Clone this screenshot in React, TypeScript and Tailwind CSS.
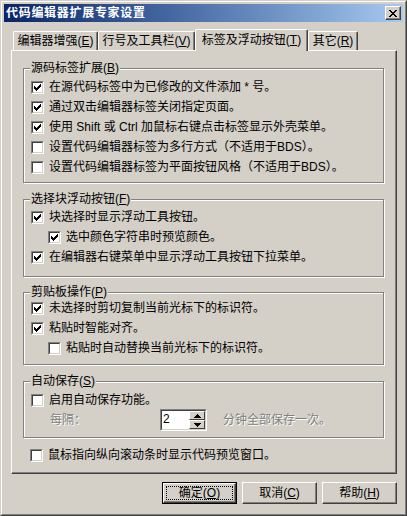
import type { ReactNode } from 'react'

const FACE = 'bg-[#d4d0c8]'

function Check() {
  return (
    <svg width="7" height="7" viewBox="0 0 7 7" shapeRendering="crispEdges">
      <path
        d="M6 0h1v3h-1zM5 1h1v3h-1zM4 2h1v3h-1zM0 2h1v3h-1zM1 3h1v3h-1zM2 4h1v3h-1zM3 3h1v3h-1z"
        fill="#000"
      />
    </svg>
  )
}

function Box({ checked }: { checked: boolean }) {
  return (
    <span className="flex h-[13px] w-[13px] shrink-0 border border-t-[#808080] border-l-[#808080] border-r-white border-b-white">
      <span className="flex flex-1 items-center justify-center border border-t-[#404040] border-l-[#404040] border-r-[#d4d0c8] border-b-[#d4d0c8] bg-white">
        {checked && <Check />}
      </span>
    </span>
  )
}

function Row({
  checked,
  indent,
  children,
}: {
  checked: boolean
  indent?: boolean
  children: ReactNode
}) {
  return (
    <div className={`flex h-[20px] items-center gap-[5px] ${indent ? 'pl-[24px]' : 'pl-[7px]'}`}>
      <Box checked={checked} />
      <span className="whitespace-nowrap leading-[14px]">{children}</span>
    </div>
  )
}

function Group({
  title,
  k,
  className,
  children,
}: {
  title: string
  k: string
  className: string
  children: ReactNode
}) {
  return (
    <div
      className={`relative w-[361px] border border-[#808080] shadow-[inset_1px_1px_0_#fff,1px_1px_0_#fff] ${className}`}
    >
      <span className={`absolute -top-[8px] left-[6px] px-[1px] leading-[14px] ${FACE}`}>
        {title}(<u>{k}</u>)
      </span>
      {children}
    </div>
  )
}

function Tab({ label, k, w, active }: { label: string; k: string; w: string; active?: boolean }) {
  return (
    <div
      className={`flex items-center justify-center rounded-t-[2px] border-t border-l border-r border-t-white border-l-white border-r-[#404040] shadow-[inset_-1px_0_0_#808080] ${FACE} ${w} ${
        active ? 'relative z-10 h-[22px] self-start pb-[2px]' : 'h-[19px] self-end'
      }`}
    >
      <span className="whitespace-nowrap leading-[14px]">
        {label}(<u>{k}</u>)
      </span>
    </div>
  )
}

function Button({ label, k, def }: { label: string; k: string; def?: boolean }) {
  if (def) {
    return (
      <div className="flex h-[22px] w-[75px] border border-black">
        <div className="flex flex-1 border border-t-white border-l-white border-r-[#404040] border-b-[#404040] p-[2px] shadow-[inset_-1px_-1px_0_#808080]">
          <div className="flex flex-1 items-center justify-center border border-dotted border-black leading-[14px]">
            {label}(<u>{k}</u>)
          </div>
        </div>
      </div>
    )
  }
  return (
    <div className="flex h-[22px] w-[75px] items-center justify-center border border-t-white border-l-white border-r-[#404040] border-b-[#404040] leading-[14px] shadow-[inset_-1px_-1px_0_#808080]">
      {label}(<u>{k}</u>)
    </div>
  )
}

function Arrow({ up }: { up?: boolean }) {
  return (
    <div className="flex flex-1 items-center justify-center border border-t-white border-l-white border-r-[#404040] border-b-[#404040] bg-[#d4d0c8]">
      <svg width="7" height="4" viewBox="0 0 7 4" shapeRendering="crispEdges">
        <path d={up ? 'M3 0h1v1h-1zM2 1h3v1h-3zM1 2h5v1h-5zM0 3h7v1h-7z' : 'M0 0h7v1h-7zM1 1h5v1h-5zM2 2h3v1h-3zM3 3h1v1h-1z'} fill="#000" />
      </svg>
    </div>
  )
}

function Disabled({ children }: { children: ReactNode }) {
  return <span className="whitespace-nowrap leading-[14px] text-[#808080] [text-shadow:1px_1px_0_#fff]">{children}</span>
}

export default function App() {
  return (
    <div
      className={`h-[516px] w-[407px] overflow-hidden text-[12px] text-black ${FACE}`}
      style={{ fontFamily: '"Liberation Sans", "Noto Sans CJK SC", sans-serif' }}
    >
      <div className="h-full border border-t-[#d4d0c8] border-l-[#d4d0c8] border-r-[#404040] border-b-[#404040]">
        <div className="flex h-full flex-col border border-t-white border-l-white border-r-[#808080] border-b-[#808080] p-[2px]">
          {/* 標題列 */}
          <div className="flex h-[18px] items-center justify-between bg-linear-to-r from-[#0a246a] to-[#a6caf0] pl-[2px] pr-[2px]">
            <span className="font-bold leading-[14px] tracking-[0.7px] text-white">代码编辑器扩展专家设置</span>
            <div className="flex h-[14px] w-[16px] items-center justify-center border border-t-white border-l-white border-r-[#404040] border-b-[#404040] bg-[#d4d0c8] shadow-[inset_-1px_-1px_0_#808080]">
              <svg width="8" height="7" viewBox="0 0 8 7" shapeRendering="crispEdges">
                <path
                  d="M0 0h2v1h-2zM6 0h2v1h-2zM1 1h2v1h-2zM5 1h2v1h-2zM2 2h4v1h-4zM3 3h2v1h-2zM2 4h4v1h-4zM1 5h2v1h-2zM5 5h2v1h-2zM0 6h2v1h-2zM6 6h2v1h-2z"
                  fill="#000"
                />
              </svg>
            </div>
          </div>

          <div className="flex flex-1 flex-col pl-[7px] pr-[6px] pt-[7px]">
            {/* 分頁標籤 */}
            <div className="flex h-[21px] pl-[2px]">
              <Tab label="编辑器增强" k="E" w="w-[85px]" />
              <Tab label="行号及工具栏" k="V" w="w-[97px]" />
              <Tab label="标签及浮动按钮" k="T" w="w-[113px]" active />
              <Tab label="其它" k="R" w="w-[50px]" />
            </div>

            {/* 分頁內容 */}
            <div className="flex h-[424px] flex-col border border-t-white border-l-white border-r-[#404040] border-b-[#404040] pl-[11px] pt-[17px] shadow-[inset_-1px_-1px_0_#808080]">
              <Group title="源码标签扩展" k="B" className="h-[115px] pt-[8px]">
                <Row checked>在源代码标签中为已修改的文件添加 * 号。</Row>
                <Row checked>通过双击编辑器标签关闭指定页面。</Row>
                <Row checked>使用 Shift 或 Ctrl 加鼠标右键点击标签显示外壳菜单。</Row>
                <Row checked={false}>设置代码编辑器标签为多行方式（不适用于BDS）。</Row>
                <Row checked={false}>设置代码编辑器标签为平面按钮风格（不适用于BDS）。</Row>
              </Group>

              <Group title="选择块浮动按钮" k="F" className="mt-[16px] h-[78px] pt-[7px]">
                <Row checked>块选择时显示浮动工具按钮。</Row>
                <Row checked indent>选中颜色字符串时预览颜色。</Row>
                <Row checked>在编辑器右键菜单中显示浮动工具按钮下拉菜单。</Row>
              </Group>

              <Group title="剪贴板操作" k="P" className="mt-[15px] h-[73px] pt-[5px]">
                <Row checked>未选择时剪切复制当前光标下的标识符。</Row>
                <Row checked>粘贴时智能对齐。</Row>
                <Row checked={false} indent>粘贴时自动替换当前光标下的标识符。</Row>
              </Group>

              <Group title="自动保存" k="S" className="mt-[16px] h-[57px] pt-[8px]">
                <Row checked={false}>启用自动保存功能。</Row>
                <div className="-mt-[1px] flex h-[22px] items-center pl-[26px]">
                  <span className="w-[110px]">
                    <Disabled>每隔：</Disabled>
                  </span>
                  <div className="flex h-[22px] w-[47px] border border-t-[#808080] border-l-[#808080] border-r-white border-b-white">
                    <div className="flex flex-1 border border-t-[#404040] border-l-[#404040] border-r-[#d4d0c8] border-b-[#d4d0c8] bg-white">
                      <span className="flex-1 pl-[1px] leading-[16px]">2</span>
                      <div className="flex w-[16px] flex-col">
                        <Arrow up />
                        <Arrow />
                      </div>
                    </div>
                  </div>
                  <span className="ml-[16px]">
                    <Disabled>分钟全部保存一次。</Disabled>
                  </span>
                </div>
              </Group>

              <div className="mt-[7px]">
                <Row checked={false}>鼠标指向纵向滚动条时显示代码预览窗口。</Row>
              </div>
            </div>

            {/* 按鈕 */}
            <div className="mt-[8px] flex justify-end gap-[5px]">
              <Button label="确定" k="O" def />
              <Button label="取消" k="C" />
              <Button label="帮助" k="H" />
            </div>
          </div>
        </div>
      </div>
    </div>
  )
}
